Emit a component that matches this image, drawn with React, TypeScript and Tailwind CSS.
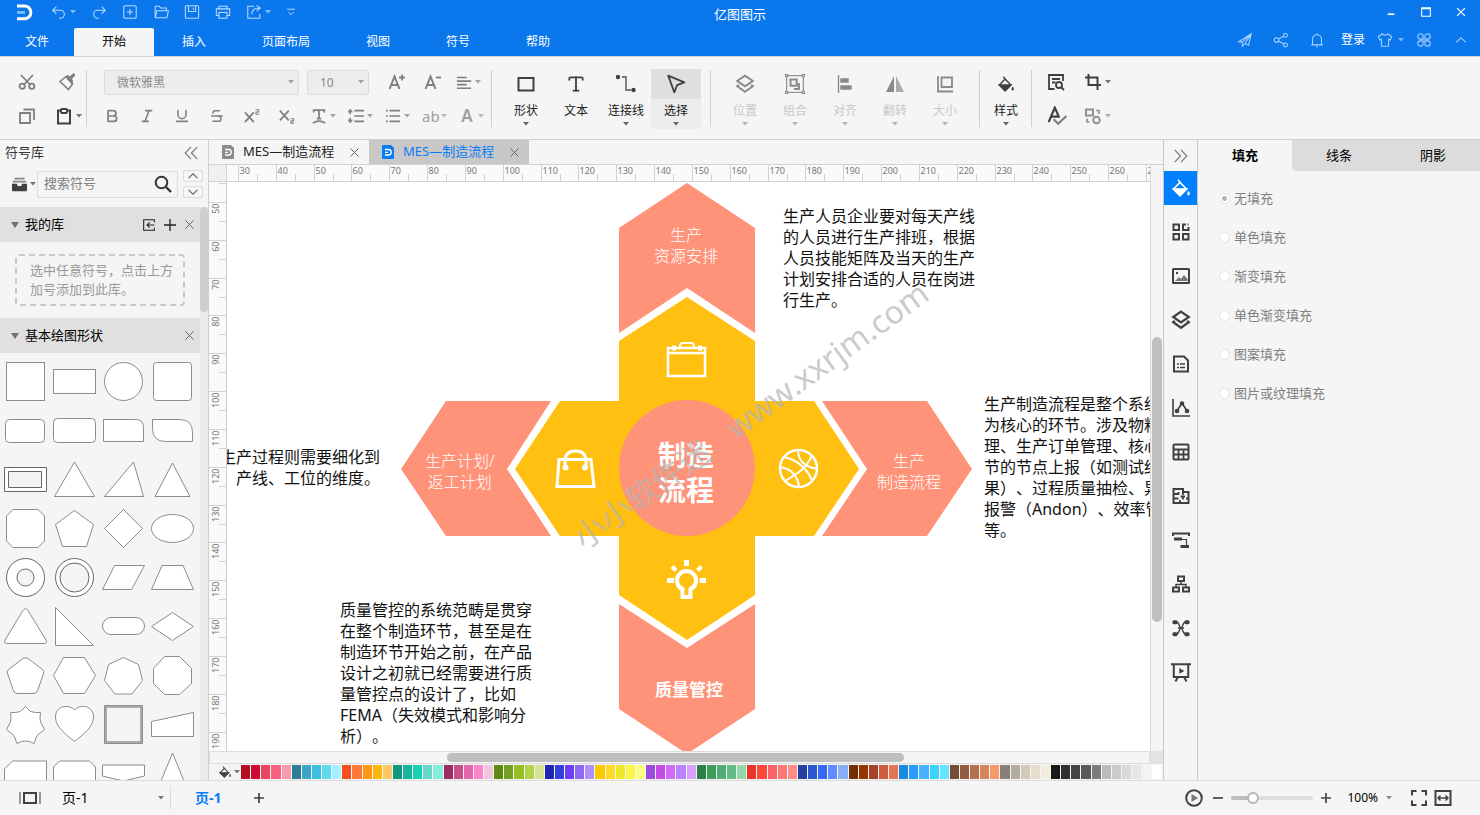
import type { ReactNode } from 'react';
import { Bold, Italic, Strikethrough, Type, Underline } from 'lucide-react';

type GlyphProps = { size?: number; sw?: number; className?: string; children: ReactNode };

function Glyph({ size = 18, sw = 2, className = '', children }: GlyphProps) {
  return (
    <svg
      width={size}
      height={size}
      viewBox="0 0 18 18"
      fill="none"
      stroke="currentColor"
      strokeWidth={sw}
      className={`shrink-0 ${className}`}
      aria-hidden="true"
    >
      {children}
    </svg>
  );
}

function Caret({ className = '' }: { className?: string }) {
  return (
    <svg width="6" height="4" viewBox="0 0 6 4" fill="currentColor" className={`shrink-0 ${className}`} aria-hidden="true">
      <path d="M0 0h6L3 3.5z" />
    </svg>
  );
}

type IconButtonProps = { label: string; caret?: boolean; className?: string; children: ReactNode };

function IconButton({ label, caret, className = '', children }: IconButtonProps) {
  return (
    <button type="button" aria-label={label} className={`flex items-center gap-[3px] ${className}`}>
      {children}
      {caret && <Caret className="opacity-70" />}
    </button>
  );
}

/* ---------- Header ---------- */

const menus = ['文件', '开始', '插入', '页面布局', '视图', '符号', '帮助'];

function Header() {
  return (
    <header className="shrink-0 bg-[#0a77ed] text-white">
      <div className="grid h-7 grid-cols-[1fr_auto_1fr]">
        <div className="flex h-6 items-center gap-[15px] pl-4 text-[#b9dbff]">
          <svg width="17" height="17" viewBox="0 0 17 17" fill="none" aria-label="亿图图示" className="mr-[3px]">
            <path d="M1 2h7.500a6.200 6.200 0 0 1 0 12.800H1" stroke="#fff" strokeWidth="3" />
            <path d="M1 8.400h8" stroke="#8cc2fb" strokeWidth="2.600" />
          </svg>
          <IconButton label="撤销" caret>
            <Glyph size={16} sw={1.2}><path d="M6 3 2 7l4 4M2 7h8.500a4.500 4.500 0 0 1 0 9H9" /></Glyph>
          </IconButton>
          <IconButton label="重做">
            <Glyph size={16} sw={1.2}><path d="m12 3 4 4-4 4M16 7H7.500a4.500 4.500 0 0 0 0 9H9" /></Glyph>
          </IconButton>
          <IconButton label="新建">
            <Glyph size={16} sw={1.2}><rect x="2" y="2" width="14" height="14" rx="1.500" /><path d="M9 5.500v7M5.500 9h7" /></Glyph>
          </IconButton>
          <IconButton label="打开">
            <Glyph size={16} sw={1.2}><path d="M2.500 15.500V2.500h4.500l1.500 2h6.500v3M2.500 15.500 4.500 7.500h13l-2 8z" /></Glyph>
          </IconButton>
          <IconButton label="保存">
            <Glyph size={16} sw={1.2}><rect x="1.500" y="2" width="15" height="14" rx="1.500" /><path d="M5 2v6.500h8V2M10.500 4v2.500" /></Glyph>
          </IconButton>
          <IconButton label="打印">
            <Glyph size={16} sw={1.2}><path d="M4.500 5.500v-3h9v3M4.500 13h-3V5.500h15V13h-3" /><rect x="4.500" y="9.500" width="9" height="6.500" /></Glyph>
          </IconButton>
          <IconButton label="导出" caret>
            <Glyph size={16} sw={1.2}><path d="M9 2.500H2v13.500h13.500v-5M6.500 11.500c0-4.500 3-7 9-7M12 1.500l4 3-4 3.500" /></Glyph>
          </IconButton>
          <IconButton label="自定义快速访问工具栏">
            <Glyph size={10} sw={1.8}><path d="M2 4h14M4 9l5 5 5-5" /></Glyph>
          </IconButton>
        </div>
        <h1 className="self-center text-[13px] leading-4">亿图图示</h1>
        <div className="flex h-6 items-center justify-end gap-6 pr-[14px]">
          <IconButton label="最小化"><Glyph size={10} sw={3}><path d="M3 13h12" /></Glyph></IconButton>
          <IconButton label="最大化"><Glyph size={12} sw={1.6}><path d="M2.500 2.500h13v13h-13zM2.500 4h13" /></Glyph></IconButton>
          <IconButton label="关闭"><Glyph size={10} sw={2.4}><path d="m2 2 14 14M16 2 2 16" /></Glyph></IconButton>
        </div>
      </div>

      <div className="flex h-7 justify-between">
        <nav className="flex text-xs">
          {menus.map((m) => (
            <button
              key={m}
              type="button"
              className={`px-7 first:px-[25px] ${m === '开始' ? 'rounded-t-[2px] bg-[#f5f5f5] text-black' : ''}`}
            >
              {m}
            </button>
          ))}
        </nav>
        <div className="flex h-6 items-center gap-4 pr-3 text-xs text-[#a9d2ff]">
          <div className="flex items-center gap-5">
            <IconButton label="发送"><Glyph size={16} sw={1.2}><path d="m2 11 14-9-3 13-4-2-3 3v-4.500zM6 11.500 16 2 9 13" /></Glyph></IconButton>
            <IconButton label="分享">
              <Glyph size={16} sw={1.2}>
                <circle cx="4" cy="9" r="2.600" /><circle cx="14" cy="3.800" r="2.200" /><circle cx="14" cy="14.500" r="2.200" />
                <path d="m6.300 7.800 5.700-3M6.300 10.200l5.700 3.300" />
              </Glyph>
            </IconButton>
            <IconButton label="通知"><Glyph size={16} sw={1.2}><path d="M2.500 14.500h13M4 14.500V8a5 5 0 0 1 10 0v6.500M8 16.500h2M9 1.500V3" /></Glyph></IconButton>
          </div>
          <div className="flex items-center gap-3">
            <button type="button" className="text-white">登录</button>
            <IconButton label="皮肤" caret className="gap-[5px]">
              <Glyph size={16} sw={1.2}><path d="M6 2 1.500 5 3 9l2-.800V16h8V8.200l2 .800 1.500-4L12 2c-1 2-5 2-6 0z" /></Glyph>
            </IconButton>
            <IconButton label="应用" className="mr-[6px]">
              <Glyph size={16} sw={1.2}>
                <path d="M8 8H5a3 3 0 1 1 3-3zM10 8V5a3 3 0 1 1 3 3zM8 10v3a3 3 0 1 1-3-3zM10 10h3a3 3 0 1 1-3 3z" />
              </Glyph>
            </IconButton>
          </div>
          <IconButton label="收起功能区"><Glyph size={14} sw={1.4}><path d="m3 12 6-6 6 6" /></Glyph></IconButton>
        </div>
      </div>
    </header>
  );
}

/* ---------- Ribbon ---------- */

function Divider() {
  return <div className="mt-px h-[57px] w-px shrink-0 bg-[#d0d0d0]" />;
}

type ToolProps = { label: string; caret?: boolean; active?: boolean; disabled?: boolean; children: ReactNode };

function Tool({ label, caret = true, active, disabled, children }: ToolProps) {
  return (
    <button
      type="button"
      disabled={disabled}
      className={`flex w-[50px] flex-col items-center rounded-[2px] text-xs ${active ? 'bg-[#ececec]' : ''}`}
    >
      <span
        className={`flex h-[30px] w-full items-center justify-center rounded-t-[2px] ${active ? 'bg-[#dfdfdf]' : ''} ${
          disabled ? 'text-[#8a8a8a]' : 'text-[#404040]'
        }`}
      >
        {children}
      </span>
      <span className={`pt-1 leading-4 ${disabled ? 'text-[#c8c8c8]' : 'text-[#222]'}`}>{label}</span>
      <span className="flex h-[10px] items-center">
        {caret && <Caret className={disabled ? 'text-[#b5b5b5]' : 'text-[#666]'} />}
      </span>
    </button>
  );
}

function FontSelect({ label, value, className }: { label: string; value: string; className: string }) {
  return (
    <div className={`relative ${className}`}>
      <select
        aria-label={label}
        defaultValue={value}
        className="h-[25px] w-full appearance-none rounded-[2px] border border-[#dcdcdc] bg-[#ededed] pl-3 text-xs text-[#8a8a8a]"
      >
        <option>{value}</option>
      </select>
      <Caret className="pointer-events-none absolute top-[11px] right-[5px] text-[#a0a0a0]" />
    </div>
  );
}

function BucketGlyph({ size = 18 }: { size?: number }) {
  return (
    <Glyph size={size} sw={1.6}>
      <path d="M8 3.500 14.500 10 8 16.500 1.500 10zM6 .800 9.500 5" />
      <path d="M1.500 10h13L8 16.500z" fill="currentColor" />
      <path d="M16.500 12.500c1 1.500 1.200 3.500 0 3.500s-1-2 0-3.500z" fill="currentColor" strokeWidth="1" />
    </Glyph>
  );
}

function LayersGlyph({ sw = 1.8 }: { sw?: number }) {
  return (
    <Glyph size={20} sw={sw}>
      <path d="m9 1.500 7 4.800-7 4.800-7-4.800zM3.500 9.800 2 11l7 5 7-5-1.500-1.200" />
    </Glyph>
  );
}

function Ribbon() {
  return (
    <div className="flex h-[84px] shrink-0 items-start border-y border-[#d2d2d2] pt-3">
      <div className="ml-[18px] flex w-[68px] flex-col gap-2 text-[#808080]">
        <div className="flex h-[26px] items-center gap-[22px]">
          <IconButton label="剪切">
            <Glyph sw={1.8}>
              <circle cx="4.200" cy="13.300" r="2.600" /><circle cx="13.800" cy="13.300" r="2.600" />
              <path d="m3 2 9 9.500M15 2l-9 9.500" />
            </Glyph>
          </IconButton>
          <IconButton label="格式刷">
            <Glyph sw={1.6}>
              <path d="M2 8.500 8 3.500l6.500 7.500-4 5.500z" />
              <path d="m7.500 3.500 3-1 1 1.500 4-3.500 1.500 1.500-3.500 4 1 2-.500 3z" fill="currentColor" strokeWidth="1" />
            </Glyph>
          </IconButton>
        </div>
        <div className="flex h-[26px] items-center gap-[19px]">
          <IconButton label="复制">
            <Glyph><path d="M2 6h10v10H2zM5.500 2.500H16v10.500" strokeWidth="1.800" /></Glyph>
          </IconButton>
          <IconButton label="粘贴" caret className="text-[#404040]">
            <Glyph><path d="M6 3.500H3v13h12v-13h-3" /><rect x="6" y="2" width="6" height="4" rx="1" /></Glyph>
          </IconButton>
        </div>
      </div>
      <Divider />

      <div className="ml-[17px] flex w-[387px] flex-col gap-2 text-[#808080]">
        <div className="flex h-[26px] items-center">
          <FontSelect label="字体" value="微软雅黑" className="w-[195px]" />
          <FontSelect label="字号" value="10" className="ml-2 w-[62px]" />
          <div className="ml-[19px] flex items-center gap-5">
            <IconButton label="增大字号" className="w-4">
              <Glyph><path d="m1.500 16 5-12.500 5 12.500M3.500 12h6" /><path d="M11 4.500h6M14 1.500v6" strokeWidth="1.800" /></Glyph>
            </IconButton>
            <IconButton label="减小字号" className="w-4">
              <Glyph><path d="m1.500 16 5-12.500 5 12.500M3.500 12h6" /><path d="M12 4.500h5" strokeWidth="1.800" /></Glyph>
            </IconButton>
            <IconButton label="对齐方式" caret className="-ml-1">
              <Glyph size={16}><path d="M1 4h11M1 8h16M1 12h11M1 16h16" strokeWidth="1.800" /></Glyph>
            </IconButton>
          </div>
        </div>
        <div className="flex h-[26px] items-center">
          <div className="flex items-center gap-[19px]">
            <IconButton label="加粗"><Bold size={16} strokeWidth={2.6} /></IconButton>
            <IconButton label="倾斜"><Italic size={16} strokeWidth={2.4} /></IconButton>
            <IconButton label="下划线"><Underline size={16} strokeWidth={2.4} /></IconButton>
            <IconButton label="删除线"><Strikethrough size={16} strokeWidth={2.2} /></IconButton>
            <IconButton label="上标">
              <Glyph size={16}><path d="m1 5 10 11M11 5 1 16" /><path d="M13 2h3.500v2.500h-3V7H17" strokeWidth="1.200" /></Glyph>
            </IconButton>
            <IconButton label="下标">
              <Glyph size={16}><path d="m1 3 10 11M11 3 1 14" /><path d="M13 12h3.500v2.500h-3V17H17" strokeWidth="1.200" /></Glyph>
            </IconButton>
          </div>
          <div className="ml-4 flex items-center gap-3">
            <IconButton label="文字排列" caret>
              <Glyph size={16}><path d="M3 5V2.500h12V5M9 2.500V12M6.500 12h5" /><path d="M2 17c4-3 10-3 14 0" strokeWidth="1.800" /></Glyph>
            </IconButton>
            <IconButton label="行距" caret>
              <Glyph size={16} sw={1.8}>
                <path d="M7 3h11M7 9h11M7 15h11M2.500 2v5M2.500 11v5" />
                <path d="M0 5l2.500-3L5 5M0 13l2.500 3L5 13" strokeWidth="1.400" />
              </Glyph>
            </IconButton>
            <IconButton label="项目符号" caret>
              <Glyph size={16} sw={1.8}><path d="M5 3h12M5 9h12M5 15h12M1 3h2M1 9h2M1 15h2" /></Glyph>
            </IconButton>
            <IconButton label="大小写" caret className="text-[#a0a0a0]">
              <span className="w-4 text-[15px] leading-4">ab</span>
            </IconButton>
            <IconButton label="字体颜色" caret className="text-[#a0a0a0]">
              <span className="w-4 text-center text-[17px] leading-4 font-semibold">A</span>
            </IconButton>
          </div>
        </div>
      </div>
      <Divider />

      <div className="mx-[9px] flex">
        <Tool label="形状"><Glyph><path d="M1.500 3h15v12.500h-15z" /></Glyph></Tool>
        <Tool label="文本" caret={false}><Type size={20} strokeWidth={2.2} /></Tool>
        <Tool label="连接线">
          <svg width="22" height="20" viewBox="0 0 22 20" fill="none" aria-hidden="true">
            <path d="M7 3h4v13h5" stroke="#777" strokeWidth="1.800" />
            <circle cx="3" cy="3" r="2.200" fill="currentColor" />
            <circle cx="18.500" cy="16" r="2.200" fill="currentColor" />
          </svg>
        </Tool>
        <Tool label="选择" active><Glyph size={20} sw={1.6}><path d="m2 1.500 14.500 6L10 10l-2.500 6.500z" strokeLinejoin="round" /></Glyph></Tool>
      </div>
      <Divider />

      <div className="mx-[9px] flex">
        <Tool label="位置" disabled><LayersGlyph /></Tool>
        <Tool label="组合" disabled>
          <Glyph size={20} sw={1}>
            <rect x="1.500" y="1.500" width="15" height="15" />
            <path d="M.500.500h2v2h-2zM15.500.500h2v2h-2zM.500 15.500h2v2h-2zM15.500 15.500h2v2h-2z" fill="#f5f5f5" />
            <path d="M5 5h5.500v5.500H5zM12.500 8v5.500H8" strokeWidth="1.800" />
          </Glyph>
        </Tool>
        <Tool label="对齐" disabled>
          <Glyph sw={1.4}><path d="M2.500 0v18" /><path d="M5 4h7v3H5zM5 11h10v3H5z" fill="currentColor" /></Glyph>
        </Tool>
        <Tool label="翻转" disabled>
          <Glyph sw={0}><path d="M8 1v16H0z" fill="currentColor" /><path d="M10 1v16h8z" fill="#aaa" /></Glyph>
        </Tool>
        <Tool label="大小" disabled>
          <Glyph sw={1.8}><path d="M5.500 2.500h10.500v9.500H5.500zM2 1v15.500h15" /></Glyph>
        </Tool>
      </div>
      <Divider />

      <div className="flex pl-px">
        <Tool label="样式"><BucketGlyph size={16} /></Tool>
      </div>
      <Divider />

      <div className="ml-[15px] grid grid-cols-[37px_auto] gap-y-2 text-[#404040]">
        <IconButton label="查找替换" className="h-[26px]">
          <Glyph><path d="M16 8V2H2v14h5.500M5 6h8M5 9.500h3.500" strokeWidth="1.800" /><circle cx="12" cy="12" r="3" strokeWidth="1.800" /><path d="m14 14 3 3" /></Glyph>
        </IconButton>
        <IconButton label="裁剪" caret>
          <Glyph><path d="M4.500 1v11H17M1 4.500h12.500V17" /></Glyph>
        </IconButton>
        <IconButton label="拼写检查" className="h-[26px]">
          <Glyph size={20}><path d="M1.500 14.500 7 1.500l4 9M4 9.500h6" /><path d="m6 12 4 4 7.500-7" stroke="#808080" /></Glyph>
        </IconButton>
        <IconButton label="替换形状" caret className="text-[#909090]">
          <Glyph><path d="M2 2.500h7v6H2z" /><circle cx="12.500" cy="13" r="3.300" /><path d="M12 3.500h3v3.500M5.500 15H3v-3.500" strokeWidth="1.600" /></Glyph>
        </IconButton>
      </div>
    </div>
  );
}

/* ---------- Symbol library ---------- */

// each symbol is drawn around 0,0 inside a 49px cell
const symbols: ReactNode[] = [
  <rect x="-18.500" y="-18.500" width="38" height="38" />,
  <rect x="-20.500" y="-11.500" width="42" height="24" />,
  <circle cx=".500" cy=".500" r="19" />,
  <rect x="-18.500" y="-18.500" width="38" height="38" rx="3" />,
  <rect x="-19.500" y="-10.500" width="39" height="23" rx="4" />,
  <rect x="-20.500" y="-11.500" width="42" height="24" rx="4" />,
  <path d="M-19.500-10.500h32q8 0 8 8v14h-40z" />,
  <path d="M-19.500-10.500h27q13 0 13 13v9h-27q-13 0-13-13z" />,
  <g stroke="#666"><path d="M-20.500-11.500h42v24h-42z" /><path d="M-16.500-7.500h33v16h-33z" fill="#f4f4f4" /></g>,
  <path d="M.500-17l20 34.500h-40z" />,
  <path d="M10.500-17l10 34.500h-39z" />,
  <path d="M.500-16l17.500 33.500h-35z" />,
  <path d="M-12-18.500h25l6.500 6.500v25l-6.500 6.500h-25l-6.500-6.500v-25z" />,
  <path d="M.500-17.500l19 14-7 22h-24l-7-22z" />,
  <path d="M.500-18.500l19 19-19 19-19-19z" />,
  <ellipse cx=".500" cy=".500" rx="21" ry="14" />,
  <g stroke="#666"><circle cx=".500" cy=".500" r="19" /><circle cx=".500" cy=".500" r="8.500" fill="#f4f4f4" /></g>,
  <g stroke="#666"><circle cx=".500" cy=".500" r="19" /><circle cx=".500" cy=".500" r="14.500" fill="#f4f4f4" /></g>,
  <path d="M-20.500 12.500l12-24h30l-13 24z" />,
  <path d="M-20.500 12.500l10.500-24h21l10.500 24z" />,
  <path d="M-2-15.500q2.500-3.500 5 0l18 29.500q1.500 3.500-2 3.500h-37q-3.500 0-2-3.500z" />,
  <path d="M-18.500-18.500v38h38z" />,
  <rect x="-20.500" y="-8.500" width="42" height="17" rx="8.500" />,
  <path d="M.500-13.500l21 14-21 14-21-14z" />,
  <path d="M-2-16.500q2.500-1.500 5 0l14.500 11q2 1.500 1 4l-5.500 16q-.500 3.500-4 4h-17q-3.500-.500-4-4l-5.500-16q-1-2.500 1-4z" />,
  <path d="M-10.500-17.500h21l11 18-11 18h-21l-10-18z" />,
  <path d="M.500-17.500l15 7 4 16-10.500 13.500h-17l-10.500-13.500 4-16z" />,
  <path d="M-7.500-18.500h15l12 12v15l-12 11h-15l-11-11v-15z" />,
  <path d="M.500-17.500l5 5q5 1.500 10 1-1 5 0 9.500l4 7.500-7.500 6-3 8q-4-2.500-8.500-2.500t-8.500 2.500l-3-8-7.500-6 4-7.500q1-4.500 0-9.500 5 .500 10-1z" />,
  <path d="M.500-14c5-6 19-5 19 7 0 10-10 17-19 24.500-9-7.500-19-14.500-19-24.500 0-12 14-13 19-7z" />,
  <g><path d="M-18.500-18.500h38v38h-38z" /><path d="M-17-17h35v35h-35z" fill="#f4f4f4" strokeWidth="2" stroke="#aaa" /></g>,
  <path d="M-20.500-2.500l42-9v24h-42z" />,
  <path d="M-20.500 12v-16l8-8h34v24z" />,
  <path d="M-20.500 12v-18l6-6h30l6 6v18z" />,
  <path d="M-20.500-8h42v11l-21 5-21-5z" />,
  <path d="M.500-20l16 39h-32z" />,
];

function CloseGlyph() {
  return <Glyph size={9} sw={2}><path d="m1 1 16 16M17 1 1 17" /></Glyph>;
}

function SectionHeader({ title, children }: { title: string; children?: ReactNode }) {
  return (
    <div className="flex h-[35px] items-center gap-[9px] bg-[#e0e0e0] pr-[6px] pl-[11px] text-[#666]">
      <h2 className="flex flex-1 items-center gap-[6px] text-[13px] text-black">
        <svg width="8" height="6" viewBox="0 0 8 6" fill="#707070" aria-hidden="true"><path d="M0 0h8L4 6z" /></svg>
        {title}
      </h2>
      {children}
      <IconButton label={`关闭${title}`}><CloseGlyph /></IconButton>
    </div>
  );
}

function Sidebar() {
  return (
    <aside className="flex w-[209px] shrink-0 flex-col border-r border-[#cfcfcf]">
      <div className="flex h-[26px] shrink-0 items-center justify-between pr-[9px] pl-[5px]">
        <h2 className="text-[13px] text-[#333]">符号库</h2>
        <IconButton label="收起符号库" className="text-[#777]">
          <Glyph size={16} sw={1.3}><path d="M9 2 2.500 9 9 16M16 2 9.500 9 16 16" /></Glyph>
        </IconButton>
      </div>
      <div className="mb-[5px] flex h-9 shrink-0 items-center pr-[5px] pl-3">
        <IconButton label="符号库菜单" caret className="w-[25px] gap-0 text-[#404040]">
          <Glyph size={15} sw={0}>
            <path d="M3 1h12v2H3zM1 4.500h16v2H1z" fill="#888" />
            <path d="M0 8h6q0 3 3 3t3-3h6v8q0 1-1 1H1q-1 0-1-1z" fill="currentColor" />
          </Glyph>
        </IconButton>
        <div className="flex h-[27px] w-[141px] items-center rounded-[2px] border border-[#dcdcdc] pr-[5px] pl-[6px]">
          <input
            type="text"
            aria-label="搜索符号"
            placeholder="搜索符号"
            className="min-w-0 flex-1 bg-transparent text-[13px] outline-none placeholder:text-[#808080]"
          />
          <Glyph className="text-[#333]"><circle cx="7.500" cy="7.500" r="5.800" /><path d="m12 12 5 5" strokeWidth="2.400" /></Glyph>
        </div>
        <div className="ml-auto flex flex-col gap-1 text-[#666]">
          <IconButton label="上一个" className="h-3 w-5 justify-center rounded-[2px] border border-[#dcdcdc]">
            <Glyph size={10} sw={2}><path d="m1 13 8-8 8 8" /></Glyph>
          </IconButton>
          <IconButton label="下一个" className="h-3 w-5 justify-center rounded-[2px] border border-[#dcdcdc]">
            <Glyph size={10} sw={2}><path d="m1 5 8 8 8-8" /></Glyph>
          </IconButton>
        </div>
      </div>

      <div className="flex min-h-0 flex-1">
        <div className="w-[200px] overflow-hidden">
          <SectionHeader title="我的库">
            <IconButton label="导入" className="text-[#222]">
              <Glyph size={12} sw={1.6}><path d="M17 5V1H1v16h16v-4M17 9H7M10 5 6 9l4 4" /></Glyph>
            </IconButton>
            <IconButton label="添加" className="text-[#222]"><Glyph size={12}><path d="M9 0v18M0 9h18" /></Glyph></IconButton>
          </SectionHeader>
          <p className="mx-[15px] my-3 rounded-[4px] border-2 border-dashed border-[#c8c8c8] py-[5px] pl-[13px] text-[13px] leading-[19px] text-[#999]">
            选中任意符号，点击上方<br />加号添加到此库。
          </p>
          <SectionHeader title="基本绘图形状" />
          <div className="grid grid-cols-[repeat(4,49px)] pt-1">
            {symbols.map((shape, i) => (
              <button key={i} type="button" aria-label={`形状 ${i + 1}`} className="size-[49px]">
                <svg width="49" height="49" viewBox="-25 -24 49 49" fill="#fff" stroke="#8c8c8c" strokeWidth="1">
                  {shape}
                </svg>
              </button>
            ))}
          </div>
        </div>
        <div className="flex-1 bg-[#ebebeb]">
          <div className="h-[105px] rounded-full bg-[#cfcfcf]" />
        </div>
      </div>
    </aside>
  );
}

/* ---------- Rulers ---------- */

const UNIT = 37.83; // px per 10 mm
const hMarks = Array.from({ length: 25 }, (_, i) => i);
const vMarks = Array.from({ length: 15 }, (_, i) => i);

function HorizontalRuler() {
  return (
    <svg className="h-4 min-w-0 flex-1 bg-[#fafafa] text-[9px]" stroke="#d2d2d2" aria-hidden="true">
      {hMarks.map((i) => {
        const x = Math.round(11 + i * UNIT) + 0.5;
        const half = Math.round(11 + (i + 0.5) * UNIT) + 0.5;
        return (
          <g key={i}>
            <path d={`M${x} 0V16M${half} 9V16`} />
            <text x={x + 1} y="9" fill="#777" stroke="none">{30 + i * 10}</text>
          </g>
        );
      })}
    </svg>
  );
}

function VerticalRuler() {
  return (
    <svg className="h-full w-[17px] shrink-0 bg-[#fafafa] text-[9px]" stroke="#d2d2d2" aria-hidden="true">
      <path d="M10 1.500H17" />
      {vMarks.map((i) => {
        const y = Math.round(20 + i * UNIT) + 0.5;
        const half = Math.round(20 + (i + 0.5) * UNIT) + 0.5;
        return (
          <g key={i}>
            <path d={`M0 ${y}H17M10 ${half}H17`} />
            <text transform={`translate(10 ${y + 1}) rotate(-90)`} textAnchor="end" fill="#777" stroke="none">
              {50 + i * 10}
            </text>
          </g>
        );
      })}
    </svg>
  );
}

/* ---------- Canvas ---------- */

function Diagram() {
  return (
    <svg width="924" height="580" className="absolute top-0 left-0" aria-hidden="true">
      <g fill="#ff937a">
        <path d="M460 1l68 45v105l-68-45-68 45V46z" />
        <path d="M595 219h105l45 68-45 67H595l45-67z" />
        <path d="M219 219h105l-44 68 44 67H219l-45-67z" />
        <path d="M392 422l68 44 68-44v105l-68 45-68-45z" />
      </g>
      <g fill="#ffc012">
        <path d="M460 115l68 44v254l-68 45-68-45V159z" />
        <path d="M288 287l45-68h254l45 68-45 67H333z" />
      </g>
      <circle cx="460" cy="286" r="68" fill="#ff937a" />

      <g fill="none" stroke="#fff" strokeWidth="2">
        {/* briefcase */}
        <path d="M441 166h37v28h-37zM441 171h37" strokeWidth="2.500" />
        <path d="M453 166v-2q0-3 3-3h8q3 0 3 3v2" />
        <path d="M445 163.500h4v5h-4zM471 163.500h4v5h-4z" fill="#fff" stroke="none" />
        {/* shopping bag */}
        <path d="M332 277.500h32l3 27h-37z" strokeWidth="3" />
        <path d="M338 285v-6q0-10 10.500-10t10.500 10v6" strokeWidth="3" />
        <circle cx="338.500" cy="285.500" r="3" fill="#fff" stroke="none" />
        <circle cx="358" cy="285.500" r="3" fill="#fff" stroke="none" />
        {/* basketball */}
        <circle cx="571.500" cy="286.500" r="18.500" strokeWidth="2.500" />
        <path d="M558 299c12-7 22-13 27-26M556 275c14 2 24 12 29 23M553 285.500c10 0 18 8 19 19.500M571 268c0 10 7 18 19 18.500M555.500 296" />
      </g>
      {/* light bulb */}
      <g fill="none" stroke="#fff">
        <path d="M455.500 407.100a9.500 9.500 0 1 1 8 0v8h-8z" strokeWidth="4" />
        <path d="M459.500 378v6M440 398.500h7M472.500 398.500h6.500" strokeWidth="5" />
        <path d="M445 384.500l4 4M474.500 384.500l-4 4" strokeWidth="4" />
      </g>
    </svg>
  );
}

function Lines({ lines, className }: { lines: string[]; className: string }) {
  return (
    <p className={`absolute whitespace-nowrap ${className}`}>
      {lines.map((line) => <span key={line} className="block">{line}</span>)}
    </p>
  );
}

function Canvas() {
  return (
    <div className="relative min-w-0 flex-1 overflow-hidden bg-white text-base leading-[21px] text-[#111] [text-spacing-trim:space-all]">
      <Diagram />
      <Lines className="top-[43px] left-[427px] text-center font-light text-white" lines={['生产', '资源安排']} />
      <Lines className="top-[269px] left-[198px] text-center font-light text-white" lines={['生产计划/', '返工计划']} />
      <Lines className="top-[269px] left-[650px] text-center font-light text-white" lines={['生产', '制造流程']} />
      <Lines className="top-[256px] left-[431px] text-[28px] leading-[35px] font-bold text-white" lines={['制造', '流程']} />
      <Lines className="top-[497px] left-[428px] text-[17px] font-bold text-white" lines={['质量管控']} />

      <Lines
        className="top-[24px] left-[556px]"
        lines={['生产人员企业要对每天产线', '的人员进行生产排班，根据', '人员技能矩阵及当天的生产', '计划安排合适的人员在岗进', '行生产。']}
      />
      <Lines className="top-[265px] left-[-7px] text-right" lines={['生产过程则需要细化到', '产线、工位的维度。']} />
      <Lines
        className="top-[212px] left-[757px]"
        lines={['生产制造流程是整个系统', '为核心的环节。涉及物料', '理、生产订单管理、核心', '节的节点上报（如测试结', '果）、过程质量抽检、异', '报警（Andon）、效率管', '等。']}
      />
      <Lines
        className="top-[418px] left-[113px]"
        lines={['质量管控的系统范畴是贯穿', '在整个制造环节，甚至是在', '制造环节开始之前，在产品', '设计之初就已经需要进行质', '量管控点的设计了，比如', 'FEMA（失效模式和影响分', '析）。']}
      />

      <div className="absolute top-[339px] left-[350px] flex origin-left -rotate-36 gap-7 text-[32px] leading-10 whitespace-nowrap text-[#b4b4b4]/70">
        <span>小小软件迷</span>
        <span>www.xxrjm.com</span>
      </div>
    </div>
  );
}

/* ---------- Workspace ---------- */

function DocIcon({ className }: { className: string }) {
  return (
    <svg width="12" height="14" viewBox="0 0 12 14" className={className} aria-hidden="true">
      <path d="M1 0h8l3 3v10q0 1-1 1H1q-1 0-1-1V1q0-1 1-1z" fill="currentColor" />
      <path d="M3 4.500h3.500a2.700 2.700 0 0 1 0 5.500H3M3 7.300h3" fill="none" stroke="#fff" strokeWidth="1.300" />
    </svg>
  );
}

const palette = [
  '#b01020', '#cc0a33', '#e94560', '#f7617f', '#f99aac', '#2a7f92', '#38a6c4', '#3fbfe0', '#60daf3', '#a8f0ff',
  '#f4511e', '#ff7a3a', '#ff9614', '#ffb70f', '#ffc765', '#139680', '#17b59c', '#1acfb2', '#66d9c8', '#86eddc',
  '#9c2c60', '#c94c8d', '#e366a9', '#f986c9', '#f2c4de', '#5c8a10', '#749f22', '#96bf23', '#b1d24a', '#d3e293',
  '#1f26b2', '#333fdd', '#6c3ff4', '#8f68f8', '#ad90f8', '#fcc800', '#fcdb28', '#f0e826', '#faf74a', '#fcfd85',
  '#9b4bdd', '#c44ce6', '#d169f9', '#bb82fc', '#dc9fff', '#2f7e44', '#3c9e56', '#50ac76', '#64bb87', '#92d7ab',
  '#e8352a', '#ff4a39', '#fa6368', '#ff7676', '#ff8f86', '#24409f', '#2d55d2', '#3568f3', '#628aff', '#87adf5',
  '#752e00', '#963500', '#a64026', '#d05c40', '#e27457', '#198ada', '#2b9bf7', '#43b3ff', '#3bd1fd', '#68e4ff',
  '#784d35', '#935c42', '#b57050', '#d5855e', '#f69a6c', '#888078', '#b3ad9c', '#cfcbb8', '#e5decf', '#f4eddb',
  '#191919', '#303030', '#454545', '#595959', '#7c7c7c', '#bbbbbb', '#cbcbcb', '#d9d9d9', '#e6e6e6', '#f3f3f3',
  '#ffffff',
];

function Workspace() {
  return (
    <main className="flex min-w-0 flex-1 flex-col">
      <div className="flex h-[25px] shrink-0 border-b border-[#d2d2d2] text-[13px]">
        <div className="flex w-40 items-center pr-[10px] pl-[13px] text-[#222]">
          <DocIcon className="text-[#8a8a8a]" />
          <button type="button" className="ml-[9px] flex-1 text-left">MES—制造流程</button>
          <IconButton label="关闭文档" className="text-[#666]"><CloseGlyph /></IconButton>
        </div>
        <div className="flex w-40 items-center bg-[#c8c8c8] pr-[10px] pl-[13px] text-[#0a7cf5]">
          <DocIcon className="text-[#0a7cf5]" />
          <button type="button" className="ml-[9px] flex-1 text-left">MES—制造流程</button>
          <IconButton label="关闭文档" className="text-[#666]"><CloseGlyph /></IconButton>
        </div>
      </div>

      <div className="flex min-h-0 flex-1">
        <div className="flex min-w-0 flex-1 flex-col">
          <div className="flex h-[17px] shrink-0 border-b border-[#d2d2d2]">
            <div className="w-[18px] shrink-0 border-r border-[#d2d2d2] bg-[#f0f0f0]" />
            <HorizontalRuler />
          </div>
          <div className="flex min-h-0 flex-1">
            <div className="shrink-0 border-r border-[#d2d2d2]"><VerticalRuler /></div>
            <Canvas />
          </div>
        </div>
        <div className="w-[13px] shrink-0 border-l border-[#d8d8d8] px-px">
          <div className="h-[29.3%]" />
          <div className="h-[48.7%] rounded-full bg-[#bfbfbf]" />
        </div>
      </div>

      <div className="flex h-[13px] shrink-0">
        <div className="flex flex-1 border border-[#dcdcdc] py-px">
          <div className="w-[25.2%]" />
          <div className="w-[48.7%] rounded-full bg-[#bfbfbf]" />
        </div>
        <div className="w-[13px] bg-[#e3e3e3]" />
      </div>

      <div className="flex h-4 shrink-0 items-center pl-[10px]">
        <IconButton label="填充颜色" caret className="w-[22px] gap-0 text-[#404040]"><BucketGlyph size={12} /></IconButton>
        <div className="flex h-[14px] flex-1 gap-px pr-px">
          {palette.map((color) => (
            <button key={color} type="button" aria-label={color} className="min-w-0 flex-1" style={{ backgroundColor: color }} />
          ))}
        </div>
      </div>
    </main>
  );
}

/* ---------- Right side ---------- */

const panels: { label: string; icon: ReactNode }[] = [
  { label: '填充', icon: <BucketGlyph /> },
  { label: '符号', icon: <Glyph><path d="M1.500 1.500h5.500v5.500H1.500zM1.500 11h5.500v5.500H1.500zM11 11h5.500v5.500H11zM14 1.500h-3v5.500h5.500v-3M15.500 1.500h1" /></Glyph> },
  { label: '图片', icon: <Glyph><rect x="1" y="2" width="16" height="14" rx=".500" /><path d="m3 14 4-4 2 2 3-4 3.500 4v2z" fill="#777" stroke="none" /><circle cx="5" cy="6" r="1.200" fill="currentColor" stroke="none" /></Glyph> },
  { label: '图层', icon: <LayersGlyph sw={2} /> },
  { label: '页面', icon: <Glyph><path d="M2 1.500h10l4 4v11H2z" /><path d="M5 9h2M8 9h5M5 12.500h2M8 12.500h5" strokeWidth="1.500" /></Glyph> },
  { label: '图表', icon: <Glyph sw={1.6}><path d="M1 0v17h17M5 12l5-8 5 8" /><g fill="currentColor"><circle cx="5" cy="12" r="1.500" /><circle cx="10" cy="4.500" r="1.500" /><circle cx="15" cy="12" r="1.500" /></g></Glyph> },
  { label: '表格', icon: <Glyph><rect x="1.500" y="1.500" width="15" height="15" rx="1" /><path d="M1 6.500h16M1 11.500h16M6.500 6.500v10M11.500 6.500v10" strokeWidth="1.800" /></Glyph> },
  { label: '平面图', icon: <Glyph><path d="M1.500 2H11v3h5.500v11h-15z" /><path d="M1.500 7h5V5M1.500 11.500h5M8 13v3M11 5v3M8.500 9.500H13M11 9v3.500M16 11.500h-2" strokeWidth="1.800" /></Glyph> },
  { label: '甘特图', icon: <Glyph><path d="M0 2.500h18M1 2v3M17 2v3" /><path d="M2 8h8M8.500 15.500H17" strokeWidth="3" /><path d="M10 8.500h4.500V15" strokeWidth="1.200" /></Glyph> },
  { label: '组织结构', icon: <Glyph><path d="M6 1.500h6v4.500H6zM1 12.500h6v4H1zM11 12.500h6v4h-6z" /><path d="M9 6v3M4 12V9.500h10V12" strokeWidth="1.500" /></Glyph> },
  { label: '思维导图', icon: <Glyph sw={1.3}><path d="M4 3c4 0 3 6 5 6s1-6 5-6M4 15c4 0 3-6 5-6s1 6 5 6M6 9h6" /><g fill="currentColor"><rect x="1" y="2" width="4" height="2.500" rx="1" /><rect x="13" y="2" width="4" height="2.500" rx="1" /><rect x="1" y="14" width="4" height="2.500" rx="1" /><rect x="13" y="14" width="4" height="2.500" rx="1" /></g></Glyph> },
  { label: '演示', icon: <Glyph size={20}><path d="M0 2h18M2.500 2v11.500h13V2M6 14l-2 3.500M12 14l2 3.500" strokeWidth="1.800" /><path d="m7.500 5.500 4.500 2.500-4.500 2.500z" fill="currentColor" stroke="none" /></Glyph> },
];

function IconRail() {
  return (
    <div className="flex w-[35px] shrink-0 flex-col border-x border-[#c8c8c8] text-[#404040]">
      <IconButton label="收起面板" className="h-[31px] justify-center text-[#777]">
        <Glyph size={16} sw={1.3}><path d="M2 2l6.500 7L2 16M9 2l6.500 7L9 16" /></Glyph>
      </IconButton>
      <div className="flex flex-col gap-[10px]">
        {panels.map((p, i) => (
          <IconButton key={p.label} label={p.label} className={`h-[34px] justify-center ${i === 0 ? 'bg-[#0080ff] text-white' : ''}`}>
            {p.icon}
          </IconButton>
        ))}
      </div>
    </div>
  );
}

const fills = ['无填充', '单色填充', '渐变填充', '单色渐变填充', '图案填充', '图片或纹理填充'];

function FillPanel() {
  return (
    <aside className="w-[282px] shrink-0">
      <div className="grid h-[31px] grid-cols-3 text-[13px]" role="tablist">
        <button type="button" role="tab" aria-selected="true" className="font-bold">填充</button>
        <button type="button" role="tab" aria-selected="false" className="rounded-bl-[4px] bg-[#dcdcdc]">线条</button>
        <button type="button" role="tab" aria-selected="false" className="bg-[#dcdcdc]">阴影</button>
      </div>
      <div className="flex flex-col gap-[19px] pt-[17px] pl-[21px] text-[13px] leading-5 text-[#808080]">
        {fills.map((f, i) => (
          <label key={f} className="flex items-center gap-1">
            <input
              type="radio"
              name="fill"
              defaultChecked={i === 0}
              className="size-[11px] appearance-none rounded-full border border-[#e2e2e2] bg-white checked:bg-[radial-gradient(circle,#b5b5b5_2px,#fff_3px)]"
            />
            {f}
          </label>
        ))}
      </div>
    </aside>
  );
}

/* ---------- Status bar ---------- */

function StatusBar() {
  return (
    <footer className="flex h-[35px] shrink-0 items-center border-t border-[#dcdcdc] text-sm text-[#404040]">
      <IconButton label="页面视图" className="ml-[19px]">
        <svg width="22" height="12" viewBox="0 0 22 12" fill="none" stroke="currentColor" aria-hidden="true">
          <path d="M5 1h12v10H5z" strokeWidth="2" />
          <path d="M1 0v12M21 0v12" stroke="#777" strokeWidth="1.500" />
        </svg>
      </IconButton>
      <button type="button" className="ml-[21px] flex w-[102px] items-center justify-between text-black">
        页-1
        <Caret className="text-[#777]" />
      </button>
      <div className="ml-[6px] h-6 w-px bg-[#dcdcdc]" />
      <button type="button" className="ml-6 font-bold text-[#0a7cf5]">页-1</button>
      <IconButton label="新建页" className="ml-8"><Glyph size={10} sw={3}><path d="M9 0v18M0 9h18" /></Glyph></IconButton>

      <div className="ml-auto flex items-center pr-7">
        <IconButton label="播放"><Glyph><circle cx="9" cy="9" r="7.800" /><path d="m6.500 5 6.500 4-6.500 4z" fill="#777" stroke="none" /></Glyph></IconButton>
        <IconButton label="缩小" className="ml-[10px]"><Glyph size={10} sw={3}><path d="M0 9h18" /></Glyph></IconButton>
        <input
          type="range"
          aria-label="缩放"
          min="0"
          max="100"
          defaultValue="22"
          className="mx-2 h-1 w-[82px] appearance-none rounded-full bg-[linear-gradient(to_right,#bdbdbd_27%,#dedede_27%)] [&::-webkit-slider-thumb]:size-3 [&::-webkit-slider-thumb]:appearance-none [&::-webkit-slider-thumb]:rounded-full [&::-webkit-slider-thumb]:border-2 [&::-webkit-slider-thumb]:border-[#b5b5b5] [&::-webkit-slider-thumb]:bg-white"
        />
        <IconButton label="放大"><Glyph size={10} sw={3}><path d="M9 0v18M0 9h18" /></Glyph></IconButton>
        <button type="button" className="ml-4 flex items-center gap-2 text-xs text-black">
          100%
          <Caret className="text-[#888]" />
        </button>
        <IconButton label="全屏" className="ml-[18px]"><Glyph><path d="M2 6.500V2h4.500M11.500 2H16v4.500M16 11.500V16h-4.500M6.500 16H2v-4.500" /></Glyph></IconButton>
        <IconButton label="适应宽度" className="ml-[6px]"><Glyph><path d="M1.500 2h15v14h-15z" /><path d="M4 9h10M6.500 6.500 4 9l2.500 2.500M11.500 6.500 14 9l-2.500 2.500" strokeWidth="1.500" /></Glyph></IconButton>
      </div>
    </footer>
  );
}

export default function App() {
  return (
    <div className="flex h-screen flex-col overflow-hidden bg-[#f5f5f5] font-['Noto_Sans','Noto_Sans_CJK_SC',sans-serif]">
      <Header />
      <Ribbon />
      <div className="flex min-h-0 flex-1">
        <Sidebar />
        <Workspace />
        <IconRail />
        <FillPanel />
      </div>
      <StatusBar />
    </div>
  );
}
